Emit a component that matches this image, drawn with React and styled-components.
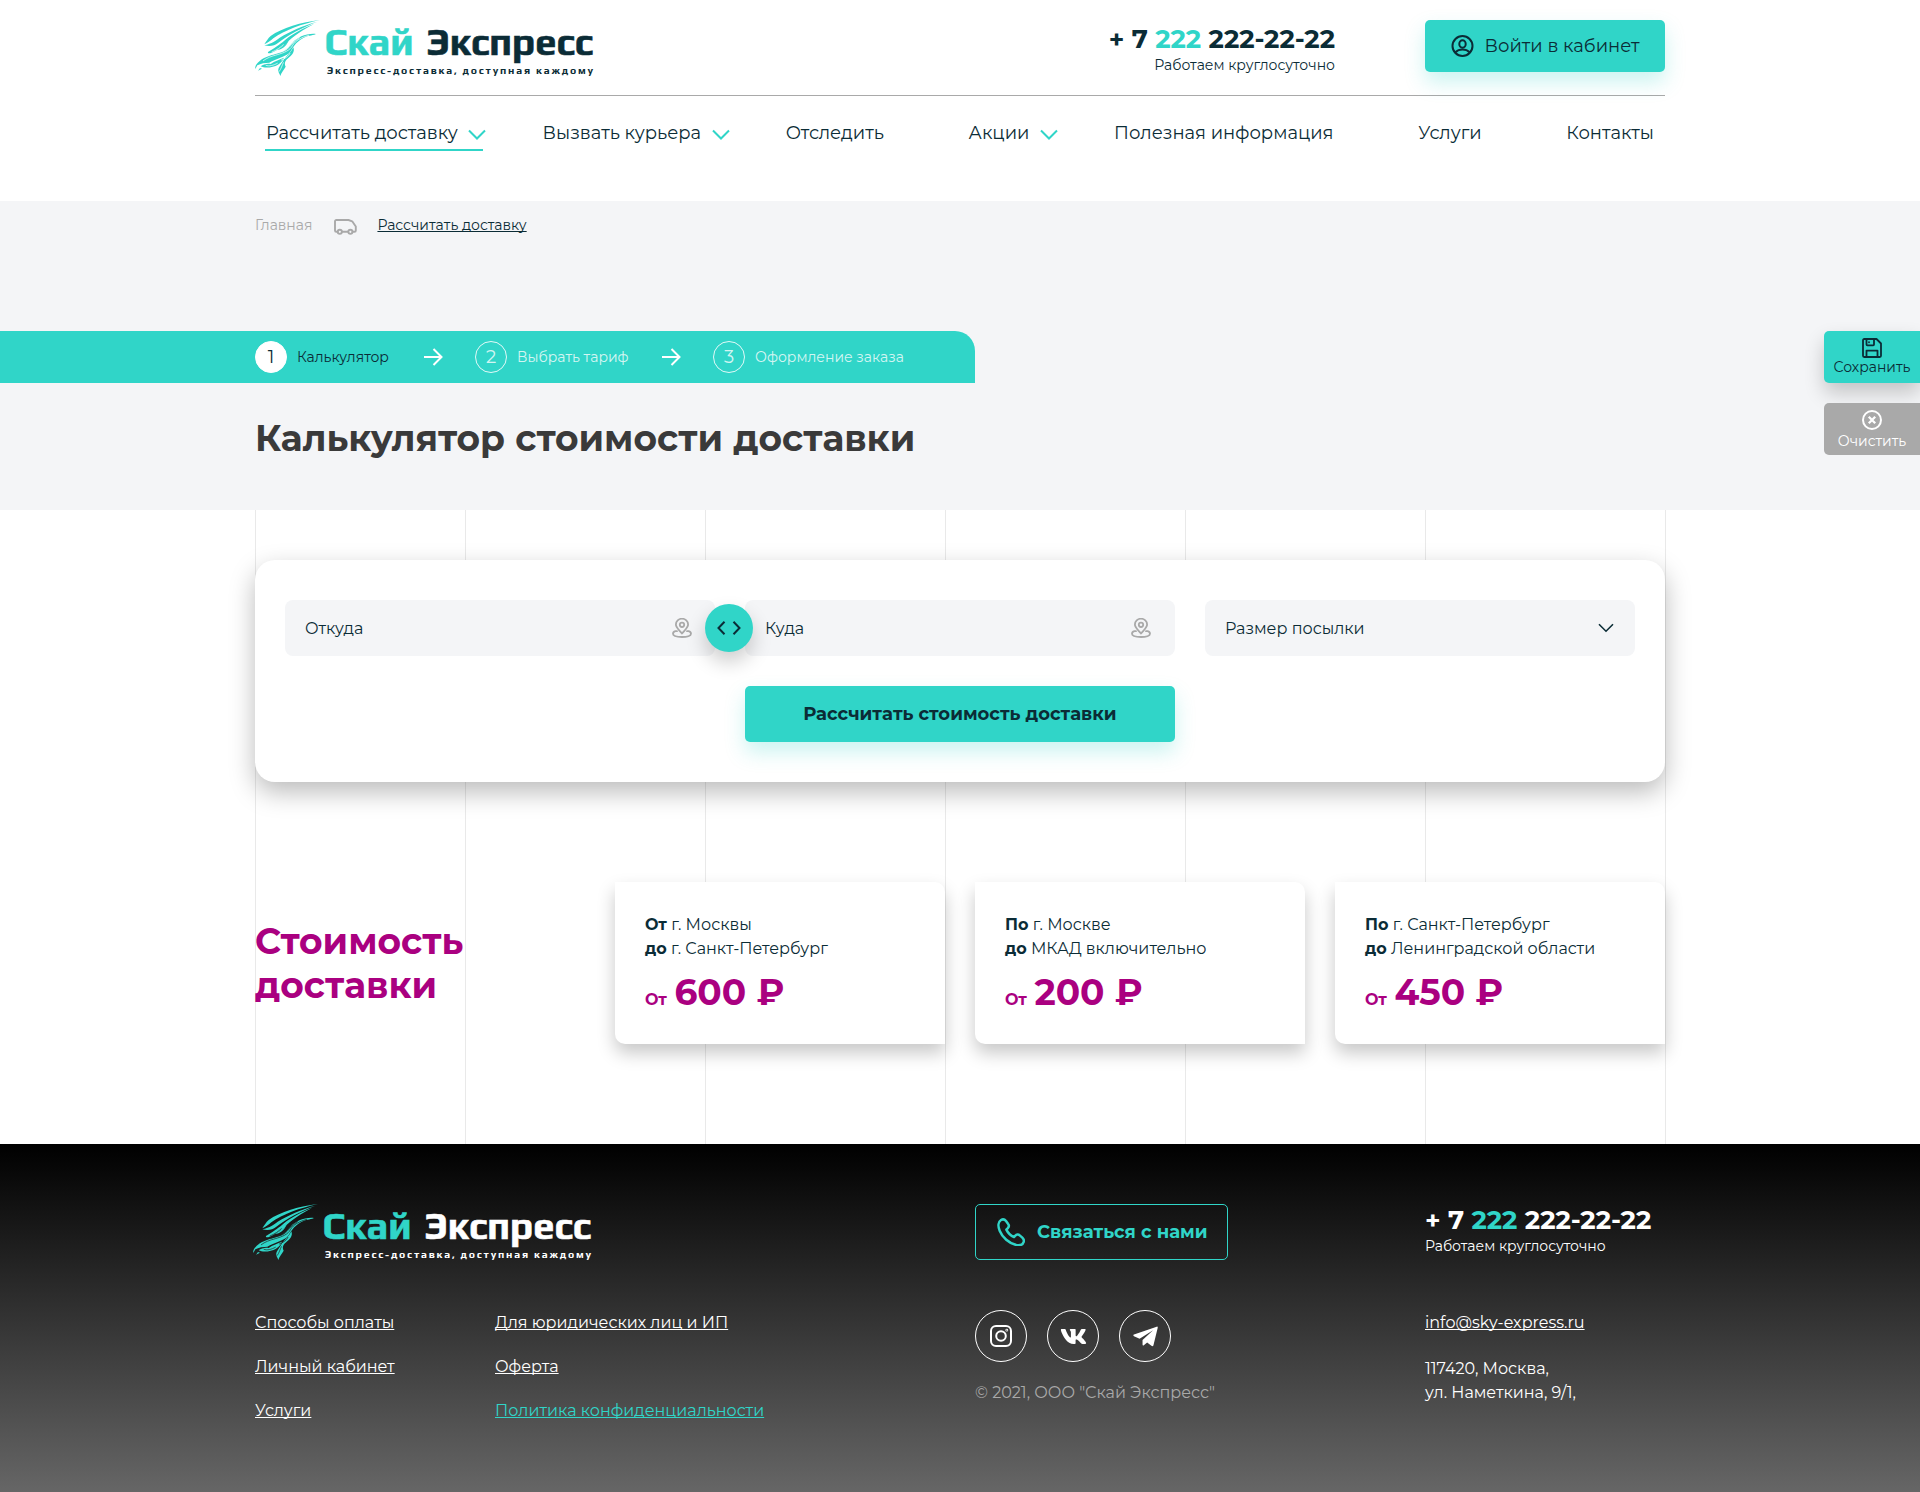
import React from "react";
import styled, { createGlobalStyle, css } from "styled-components";
import { FaVk } from "react-icons/fa";

const teal = "#30d5c8";
const ink = "#0b2c36";
const grey = "#a9a9a9";
const magenta = "#aa0080";

const GlobalStyle = createGlobalStyle`
  *, *::before, *::after { box-sizing: border-box; }
  body {
    margin: 0;
    background: #fff;
    color: ${ink};
    font-family: Montserrat, Inter, "Open Sans", sans-serif;
    font-size: 16px;
    line-height: 24px;
  }
  a { color: inherit; }
  svg { display: block; flex: none; }
`;

const Container = styled.div`
  width: 1410px;
  margin: 0 auto;
`;

/* ---------- header ---------- */

const HeaderRoot = styled.header`
  height: 201px;
`;

const TopRow = styled.div`
  display: flex;
  align-items: flex-start;
  height: 96px;
  padding-top: 20px;
  border-bottom: 1px solid ${grey};
`;

const PhoneBlock = styled.div`
  display: flex;
  flex-direction: column;
  align-items: ${(p) => (p.$end ? "flex-end" : "flex-start")};
  margin-left: ${(p) => (p.$end ? "auto" : "0")};
  margin-right: ${(p) => (p.$end ? "90px" : "0")};
  padding-top: ${(p) => (p.$end ? "3px" : "0")};
  color: ${(p) => (p.$end ? ink : "#fff")};
`;

const PhoneNumber = styled.div`
  font-size: 26px;
  font-weight: 700;
  line-height: 32px;
  white-space: nowrap;
`;

const Accent = styled.span`
  color: ${teal};
`;

const PhoneNote = styled.div`
  margin-top: 1px;
  font-size: 14px;
  line-height: 18px;
`;

const LoginButton = styled.button`
  display: flex;
  align-items: center;
  justify-content: center;
  gap: 10px;
  width: 240px;
  height: 52px;
  padding: 0;
  border: 0;
  border-radius: 5px;
  background: ${teal};
  box-shadow: 0 10px 20px rgba(48, 213, 200, 0.25);
  color: ${ink};
  font: 400 18px/22px Montserrat, Inter, sans-serif;
`;

const Nav = styled.nav`
  display: flex;
  justify-content: space-between;
  padding: 25px 11px 0;
`;

const NavItem = styled.a`
  position: relative;
  font-size: 18px;
  line-height: 24px;
  text-decoration: none;
  ${(p) =>
    p.$active &&
    css`
      &::after {
        content: "";
        position: absolute;
        left: -1px;
        right: -25px;
        top: 28px;
        height: 2px;
        background: ${teal};
      }
    `}
`;

const NavArrow = styled.span`
  position: absolute;
  left: 100%;
  top: 8px;
  margin-left: 10.500px;
`;

/* ---------- page head ---------- */

const Hero = styled.section`
  height: 309px;
  background: #f4f5f7;
`;

const Crumbs = styled(Container)`
  display: flex;
  align-items: flex-start;
  height: 130px;
  padding-top: 15px;
  font-size: 14px;
  line-height: 18px;
`;

const Crumb = styled.a`
  color: ${(p) => (p.$current ? ink : grey)};
  text-decoration: ${(p) => (p.$current ? "underline" : "none")};
  text-decoration-skip-ink: none;
`;

const CrumbIcon = styled.span`
  margin: 3px 20px 0 22px;
`;

const StepRow = styled.div`
  display: flex;
  justify-content: space-between;
  align-items: flex-start;
  height: 52px;
`;

const StepBar = styled.div`
  display: flex;
  align-items: center;
  width: 975px;
  height: 52px;
  padding-left: 255px;
  border-radius: 0 20px 0 0;
  background: ${teal};
`;

const Step = styled.div`
  display: flex;
  align-items: center;
  gap: 10px;
  width: ${(p) => p.$width}px;
  color: ${(p) => (p.$active ? ink : "rgba(255,255,255,.8)")};
  font-size: 14px;
  line-height: 18px;
  white-space: nowrap;
`;

const StepNumber = styled.span`
  display: flex;
  flex: none;
  align-items: center;
  justify-content: center;
  width: 32px;
  height: 32px;
  border: 1px solid ${(p) => (p.$active ? "#fff" : "rgba(255,255,255,.85)")};
  border-radius: 50%;
  background: ${(p) => (p.$active ? "#fff" : "transparent")};
  font-size: 18px;
`;

const StepArrow = styled.span`
  margin: 0 32px 0 35px;
`;

const SideActions = styled.div`
  display: flex;
  flex-direction: column;
  gap: 20px;
`;

const SideAction = styled.button`
  display: flex;
  flex-direction: column;
  align-items: center;
  gap: ${(p) => (p.$muted ? "2px" : "0")};
  width: 96px;
  height: 52px;
  padding: 7px 0 0;
  border: 0;
  border-radius: 5px 0 0 5px;
  background: ${(p) => (p.$muted ? grey : teal)};
  box-shadow: ${(p) => (p.$muted ? "none" : "0 10px 20px rgba(0,0,0,.2)")};
  color: ${(p) => (p.$muted ? "#fff" : ink)};
  font: 400 14px/18px Montserrat, Inter, sans-serif;
`;

const Title = styled.h1`
  margin: 33px 0 0;
  color: #3a3a3a;
  font-size: 36px;
  font-weight: 700;
  line-height: 44px;
`;

/* ---------- main ---------- */

const Main = styled.main`
  width: 1411px;
  height: 634px;
  margin-left: calc(50% - 705px);
  padding: 50px 1px 0 0;
  background:
    linear-gradient(#e9e9e9, #e9e9e9) 0 0 / 1px 100% no-repeat,
    linear-gradient(90deg, #e9e9e9 1px, transparent 1px) -30px 0 / 240px 100%;
`;

const CalcCard = styled.form`
  display: grid;
  grid-template-columns: repeat(3, 430px);
  gap: 30px;
  height: 222px;
  padding: 40px 30px;
  border-radius: 20px;
  background: #fff;
  box-shadow: 0 10px 26px rgba(0, 0, 0, 0.27);
`;

const Field = styled.label`
  position: relative;
  display: flex;
  align-items: center;
  justify-content: space-between;
  height: 56px;
  padding: 0 ${(p) => p.$end}px 0 20px;
  border-radius: 8px;
  background: #f4f5f7;
`;

const FieldLabel = styled.span`
  padding-top: 2px;
`;

const Swap = styled.span`
  position: absolute;
  z-index: 1;
  right: -38px;
  top: 4px;
  display: flex;
  align-items: center;
  justify-content: center;
  width: 48px;
  height: 48px;
  border-radius: 50%;
  background: ${teal};
  box-shadow: 0 10px 20px rgba(0, 0, 0, 0.2);
`;

const Submit = styled.button`
  grid-column: 2;
  height: 56px;
  border: 0;
  border-radius: 5px;
  background: ${teal};
  box-shadow: 0 10px 20px rgba(48, 213, 200, 0.25);
  color: ${ink};
  font: 700 18px/22px Montserrat, Inter, sans-serif;
`;

const Prices = styled.section`
  display: grid;
  grid-template-columns: 330px 330px 330px 330px;
  gap: 30px;
  align-items: center;
  margin-top: 100px;
`;

const PricesTitle = styled.h2`
  margin: 0;
  color: ${magenta};
  font-size: 36px;
  font-weight: 700;
  line-height: 44px;
`;

const PriceCard = styled.article`
  height: 162px;
  padding: 31px 30px 30px;
  border-radius: 0 10px 0 10px;
  background: #fff;
  box-shadow: 0 9px 18px rgba(0, 0, 0, 0.22);
  white-space: nowrap;
`;

const PriceValue = styled.div`
  display: flex;
  align-items: baseline;
  gap: 7.500px;
  margin-top: 9px;
  color: ${magenta};
  font-size: 36px;
  font-weight: 700;
  line-height: 44px;
`;

const PriceFrom = styled.span`
  font-size: 16px;
`;

/* ---------- footer ---------- */

const FooterRoot = styled.footer`
  height: 348px;
  padding-top: 60px;
  background: linear-gradient(#000, #666);
  color: #fff;
`;

const FooterGrid = styled(Container)`
  display: grid;
  grid-template-columns: 240px 480px 450px 240px;
  grid-template-rows: 56px auto;
  row-gap: 50px;
`;

const FooterLogo = styled.div`
  grid-column: span 2;
  margin-left: -2px;
`;

const FooterLinks = styled.div`
  display: flex;
  flex-direction: column;
  align-items: flex-start;
  gap: 20px;
  padding-top: 1px;
`;

const FooterLink = styled.a`
  color: ${(p) => (p.$accent ? teal : "#fff")};
  text-decoration: underline;
  text-decoration-skip-ink: none;
`;

const ContactButton = styled.button`
  display: flex;
  align-items: center;
  gap: 12px;
  width: 253px;
  height: 56px;
  padding: 0 0 0 21px;
  border: 1px solid ${teal};
  border-radius: 5px;
  background: transparent;
  color: ${teal};
  font: 700 18px/22px Montserrat, Inter, sans-serif;
`;

const Socials = styled.div`
  display: flex;
  gap: 20px;
`;

const Social = styled.a`
  display: flex;
  align-items: center;
  justify-content: center;
  width: 52px;
  height: 52px;
  border: 1px solid #fff;
  border-radius: 50%;
`;

const Copyright = styled.div`
  margin-top: 19px;
  color: ${grey};
`;

const Contacts = styled.div`
  padding-top: 1px;
`;

const Address = styled.div`
  margin-top: 22px;
`;

/* ---------- drawings ---------- */

const LogoText = styled.text`
  font-family: Play, "Exo 2", Montserrat, Inter, sans-serif;
  font-weight: 700;
  stroke-width: ${(p) => p.$outline || 0}px;
`;

function Logo({ id, color }) {
  return (
    <svg width="342" height="58" viewBox="0 0 342 58">
      <mask id={id} maskUnits="userSpaceOnUse" x="40" y="55" width="210" height="180">
        <rect x="40" y="55" width="210" height="180" fill="#fff" />
        <g fill="none" stroke="#000" strokeWidth="2" strokeLinecap="round">
          <path d="M206 106C184 112 166 122 158 136C150 152 132 158 112 164C96 168 80 174 70 182" />
          <path d="M178 113C160 124 150 142 138 150C130 155 112 158 98 163" />
          <path d="M124 180C134 176 146 170 150 160" />
          <path d="M118 214C124 206 126 196 130 188" />
          <path d="M78 196C88 200 100 196 112 190" />
          <path d="M96 156C110 150 122 142 130 134" />
        </g>
      </mask>
      <g transform="scale(.33333) translate(-45 -60)" fill={teal}>
        <g mask={`url(#${id})`}>
          <path d="M240 60C185 66 125 84 92 108C84 115 79 124 73 133C84 128 92 122 100 115C135 90 185 72 240 60Z" />
          <path d="M232 65C190 77 150 93 118 114C108 121 96 131 73 136C90 140 104 137 114 129C145 104 190 81 232 65Z" />
          <path d="M222 72C190 84 160 100 138 118C124 130 112 140 84 156C82 162 92 160 100 156C120 146 132 138 140 130C158 108 192 88 222 72Z" />
          <path d="M228 102C200 99 172 112 158 128C146 140 140 152 118 158C100 163 74 170 60 182C50 190 44 198 46 207L52 196C62 190 76 188 88 188C108 176 140 170 150 156C158 146 164 128 190 114C204 106 214 108 228 102Z" />
          <path d="M160 142C164 152 160 160 152 168C140 178 130 186 137 200C132 210 124 216 121 228C118 218 112 214 116 204C122 194 128 186 132 178C142 166 154 156 160 142Z" />
          <path d="M62 199C76 206 100 202 114 194C124 187 130 180 132 173C120 179 104 182 92 192C82 190 70 192 62 199Z" />
          <path d="M54 212L60 204L66 206Z" />
          <path d="M146 122C136 134 124 142 112 150C124 148 138 140 146 122Z" />
        </g>
      </g>
      <LogoText x="69.5" y="35.300" fontSize="38" textLength="89" lengthAdjust="spacingAndGlyphs" fill={teal} stroke={teal} $outline={0.6}>Скай</LogoText>
      <LogoText x="172" y="35.300" fontSize="38" textLength="166" lengthAdjust="spacingAndGlyphs" fill={color} stroke={color} $outline={0.6}>Экспресс</LogoText>
      <LogoText x="72" y="53.700" fontSize="10.5" textLength="266" fill={color}>Экспресс-доставка, доступная каждому</LogoText>
    </svg>
  );
}

const stroke = { fill: "none", strokeLinecap: "round", strokeLinejoin: "round" };

const ChevronDown = () => (
  <svg width="18" height="12" viewBox="0 0 18 12" fill="none" stroke={teal} strokeWidth="2">
    <path d="M1 1.500L9 9.500L17 1.500" />
  </svg>
);

const UserIcon = () => (
  <svg width="24" height="24" viewBox="0 0 24 24" {...stroke} stroke={ink} strokeWidth="2">
    <circle cx="11.500" cy="12" r="10" />
    <ellipse cx="11.500" cy="10" rx="3.200" ry="3.800" />
    <path d="M4.500 18.200C6.300 16.400 8.800 15.600 11.500 15.600s5.200.8 7 2.600" />
  </svg>
);

const TruckIcon = () => (
  <svg width="23" height="16" viewBox="0 0 23 16" {...stroke} stroke={grey} strokeWidth="1.900">
    <path d="M3.600 12.800H2.300A1.300 1.300 0 0 1 1 11.500V2.300A1.300 1.300 0 0 1 2.300 1H14.500L18.200 2.300L21.800 7.500V11.500A1.300 1.300 0 0 1 20.500 12.800H18.600M8 12.800H14.200" />
    <circle cx="5.800" cy="12.800" r="2.100" />
    <circle cx="16.400" cy="12.800" r="2.100" />
  </svg>
);

const StepArrowIcon = () => (
  <svg width="19" height="18" viewBox="0 0 19 18" fill="none" stroke="#fff" strokeWidth="2">
    <path d="M0 9H17.500M9.500 1L17.500 9L9.500 17" />
  </svg>
);

const SaveIcon = () => (
  <svg width="20" height="20" viewBox="0 0 20 20" {...stroke} stroke={ink} strokeWidth="1.800">
    <path d="M1 2.200A1.200 1.200 0 0 1 2.200 1H14.500L19 5.500V17.800A1.200 1.200 0 0 1 17.800 19H2.200A1.200 1.200 0 0 1 1 17.800Z" />
    <path d="M4.500 1.500V6.500A.8.800 0 0 0 5.300 7.300H11.200A.8.800 0 0 0 12 6.500V1.500M7 4.200V4.300" />
    <path d="M4.500 18.500V12.600H15.500V18.500" />
  </svg>
);

const ClearIcon = () => (
  <svg width="20" height="20" viewBox="0 0 20 20" fill="none" stroke="#fff" strokeWidth="2">
    <circle cx="10" cy="10" r="9" />
    <path d="M6.800 6.800L13.200 13.200M13.200 6.800L6.800 13.200" strokeWidth="2.300" />
  </svg>
);

const PinIcon = () => (
  <svg width="20" height="20" viewBox="0 0 20 20" {...stroke} stroke={grey} strokeWidth="1.800">
    <path d="M10 15.500C7 11.800 3.900 9.500 3.900 6.500A6.100 5.800 0 0 1 16.100 6.500C16.100 9.500 13 11.800 10 15.500Z" />
    <circle cx="10" cy="6.800" r="2.200" />
    <path d="M5 13.200H3.400C2 13.600 1 14.600 1 15.800C1 17.900 4.800 19 10 19S19 17.900 19 15.800C19 14.600 18 13.600 16.600 13.200H15" />
  </svg>
);

const SwapIcon = () => (
  <svg width="24" height="14" viewBox="0 0 24 14" fill="none" stroke={ink} strokeWidth="2">
    <path d="M7.500 .8L1.500 7L7.500 13.200M16.500 .8L22.500 7L16.500 13.200" />
  </svg>
);

const SelectIcon = () => (
  <svg width="16" height="10" viewBox="0 0 16 10" fill="none" stroke={ink} strokeWidth="1.600">
    <path d="M1 1.200L8 8.200L15 1.200" />
  </svg>
);

const PhoneIcon = () => (
  <svg width="28" height="28" viewBox="80 68 84 84" {...stroke} stroke={teal} strokeWidth="7.500">
    <path d="M92 74C84 79 82 92 88 106C96 126 116 144 138 149C150 151 158 147 160 140C162 135 160 131 156 127L149 121C144 116 138 117 135 121L131 125C123 122 112 111 108 103L112 99C116 95 117 90 113 85L107 77C103 72 97 71 92 74Z" />
  </svg>
);

const InstagramIcon = () => (
  <svg width="22" height="22" viewBox="0 0 22 22" fill="none" stroke="#fff" strokeWidth="2">
    <rect x="1" y="1" width="20" height="20" rx="5" />
    <circle cx="11" cy="11" r="4.800" />
    <circle cx="16.800" cy="5.200" r=".4" />
  </svg>
);

const TelegramIcon = () => (
  <svg width="25" height="21" viewBox="487 392 76 62" fill="#fff">
    <path d="M490 417L559 393Q563 392 562 397L549 450Q547 454 543 451L530 441L519 450Q516 451 516 447V434L548 404L507 430L490 422Q486 419 490 417Z" />
  </svg>
);

/* ---------- content ---------- */

const navItems = [
  { label: "Рассчитать доставку", menu: true, active: true },
  { label: "Вызвать курьера", menu: true },
  { label: "Отследить" },
  { label: "Акции", menu: true },
  { label: "Полезная информация" },
  { label: "Услуги" },
  { label: "Контакты" },
];

const steps = [
  { label: "Калькулятор", width: 134 },
  { label: "Выбрать тариф", width: 152 },
  { label: "Оформление заказа", width: 192 },
];

const prices = [
  { a: "От", from: "г. Москвы", to: "г. Санкт-Петербург", value: "600 ₽" },
  { a: "По", from: "г. Москве", to: "МКАД включительно", value: "200 ₽" },
  { a: "По", from: "г. Санкт-Петербург", to: "Ленинградской области", value: "450 ₽" },
];

function Phone({ end }) {
  return (
    <PhoneBlock $end={end}>
      <PhoneNumber>
        + 7 <Accent>222</Accent> 222-22-22
      </PhoneNumber>
      <PhoneNote>Работаем круглосуточно</PhoneNote>
    </PhoneBlock>
  );
}

export default function App() {
  return (
    <>
      <GlobalStyle />
      <HeaderRoot>
        <Container>
          <TopRow>
            <Logo id="bird-header" color={ink} />
            <Phone end />
            <LoginButton>
              <UserIcon />
              Войти в кабинет
            </LoginButton>
          </TopRow>
          <Nav>
            {navItems.map((item) => (
              <NavItem key={item.label} $active={item.active}>
                {item.label}
                {item.menu && (
                  <NavArrow>
                    <ChevronDown />
                  </NavArrow>
                )}
              </NavItem>
            ))}
          </Nav>
        </Container>
      </HeaderRoot>

      <Hero>
        <Crumbs>
          <Crumb>Главная</Crumb>
          <CrumbIcon>
            <TruckIcon />
          </CrumbIcon>
          <Crumb $current>Рассчитать доставку</Crumb>
        </Crumbs>
        <StepRow>
          <StepBar>
            {steps.map((step, i) => (
              <React.Fragment key={step.label}>
                {i > 0 && (
                  <StepArrow>
                    <StepArrowIcon />
                  </StepArrow>
                )}
                <Step $active={i === 0} $width={step.width}>
                  <StepNumber $active={i === 0}>{i + 1}</StepNumber>
                  {step.label}
                </Step>
              </React.Fragment>
            ))}
          </StepBar>
          <SideActions>
            <SideAction>
              <SaveIcon />
              Сохранить
            </SideAction>
            <SideAction $muted>
              <ClearIcon />
              Очистить
            </SideAction>
          </SideActions>
        </StepRow>
        <Container>
          <Title>Калькулятор стоимости доставки</Title>
        </Container>
      </Hero>

      <Main>
        <CalcCard>
          <Field $end={23}>
            <FieldLabel>Откуда</FieldLabel>
            <PinIcon />
            <Swap>
              <SwapIcon />
            </Swap>
          </Field>
          <Field $end={24}>
            <FieldLabel>Куда</FieldLabel>
            <PinIcon />
          </Field>
          <Field $end={21}>
            <FieldLabel>Размер посылки</FieldLabel>
            <SelectIcon />
          </Field>
          <Submit type="button">Рассчитать стоимость доставки</Submit>
        </CalcCard>
        <Prices>
          <PricesTitle>
            Стоимость
            <br />
            доставки
          </PricesTitle>
          {prices.map((p) => (
            <PriceCard key={p.value}>
              <div>
                <b>{p.a}</b> {p.from}
              </div>
              <div>
                <b>до</b> {p.to}
              </div>
              <PriceValue>
                <PriceFrom>От</PriceFrom>
                <span>{p.value}</span>
              </PriceValue>
            </PriceCard>
          ))}
        </Prices>
      </Main>

      <FooterRoot>
        <FooterGrid>
          <FooterLogo>
            <Logo id="bird-footer" color="#fff" />
          </FooterLogo>
          <ContactButton>
            <PhoneIcon />
            Связаться с нами
          </ContactButton>
          <Phone />
          <FooterLinks>
            <FooterLink>Способы оплаты</FooterLink>
            <FooterLink>Личный кабинет</FooterLink>
            <FooterLink>Услуги</FooterLink>
          </FooterLinks>
          <FooterLinks>
            <FooterLink>Для юридических лиц и ИП</FooterLink>
            <FooterLink>Оферта</FooterLink>
            <FooterLink $accent>Политика конфиденциальности</FooterLink>
          </FooterLinks>
          <div>
            <Socials>
              <Social>
                <InstagramIcon />
              </Social>
              <Social>
                <FaVk size={27} color="#fff" />
              </Social>
              <Social>
                <TelegramIcon />
              </Social>
            </Socials>
            <Copyright>© 2021, ООО "Скай Экспресс"</Copyright>
          </div>
          <Contacts>
            <FooterLink>info@sky-express.ru</FooterLink>
            <Address>
              117420, Москва,
              <br />
              ул. Наметкина, 9/1,
            </Address>
          </Contacts>
        </FooterGrid>
      </FooterRoot>
    </>
  );
}
